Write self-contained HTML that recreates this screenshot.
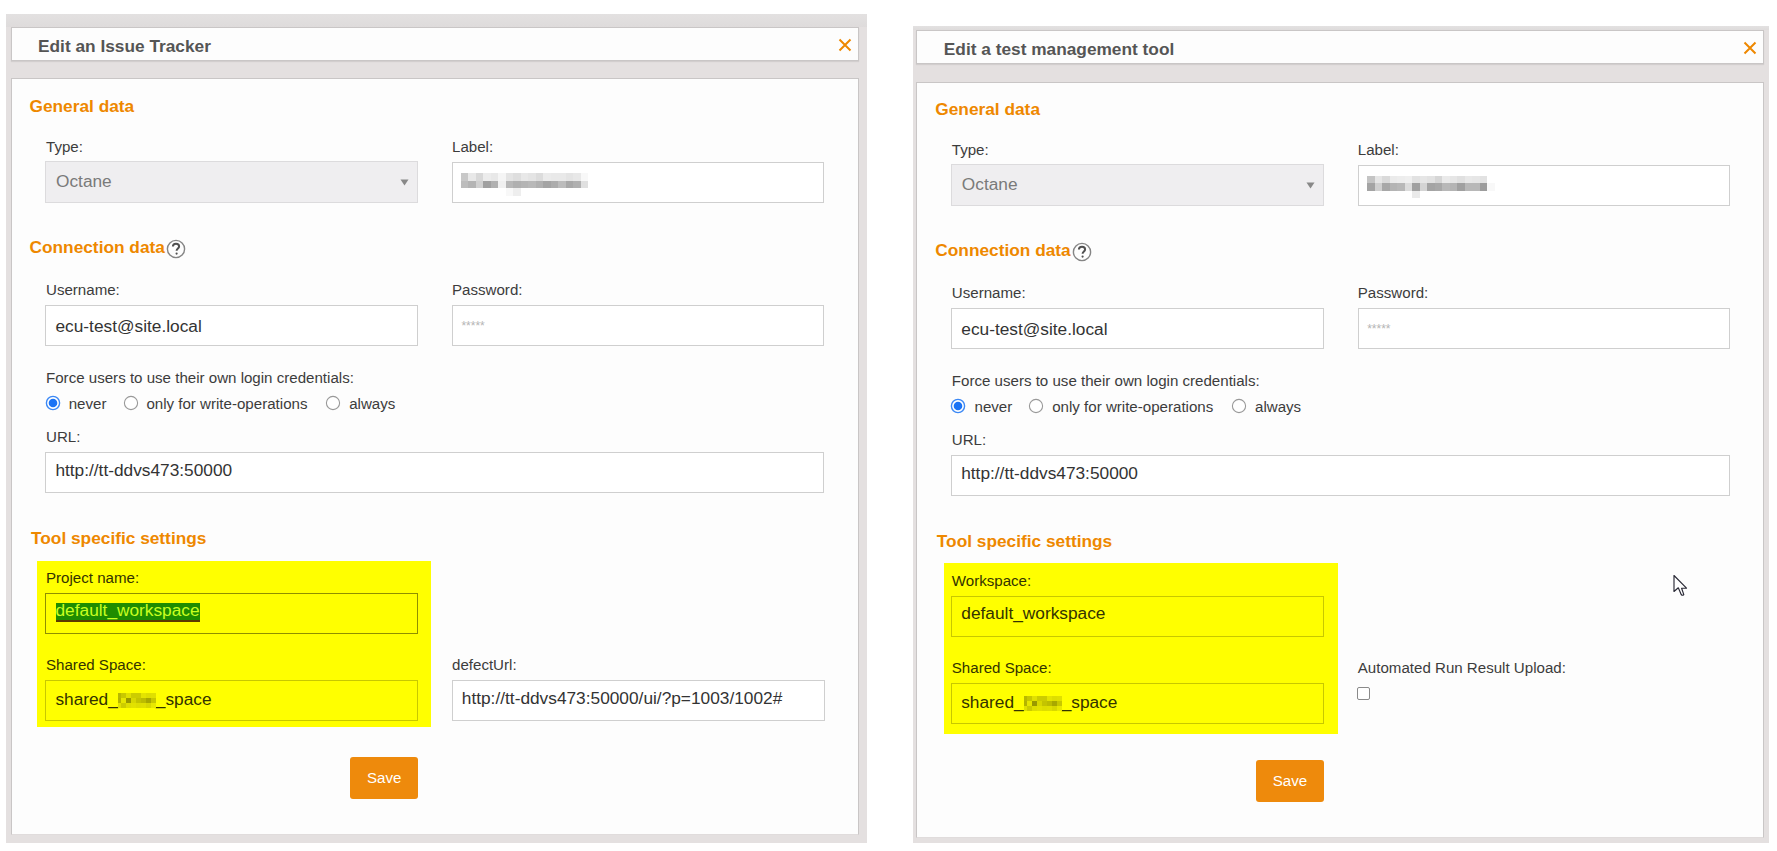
<!DOCTYPE html>
<html><head><meta charset="utf-8"><style>
html,body{margin:0;padding:0;background:#fff;width:1777px;height:851px;overflow:hidden;position:relative}
.t{position:absolute;white-space:nowrap;font-family:"Liberation Sans",sans-serif}
.r{position:absolute}
</style></head><body>
<div class="r" style="left:6.0px;top:14.0px;width:861.0px;height:829.0px;background:#e4e0e0"></div>
<div class="r" style="left:6.0px;top:14.0px;width:861.0px;height:13.0px;background:linear-gradient(#e3e1e1,#dedbdb)"></div>
<div class="r" style="left:11.0px;top:27.0px;width:848.0px;height:34.0px;background:#fdfdfd;border:1px solid #c9c6c6;box-sizing:border-box;box-shadow:0 1px 1px rgba(0,0,0,.08)"></div>
<div class="r" style="left:11.0px;top:78.0px;width:848.0px;height:757.0px;background:#fdfdfd;border:1px solid #c9c6c6;border-bottom-color:#e0dcdc;box-sizing:border-box"></div>
<div class="t" style="left:38.0px;top:36.31px;font-size:17.3px;line-height:21px;color:#555;font-weight:bold;">Edit an Issue Tracker</div>
<svg class="r" style="left:837.5px;top:38px" width="14" height="14" viewBox="0 0 14 14"><path d="M1.5 1.5L12.5 12.5M12.5 1.5L1.5 12.5" stroke="#ee8800" stroke-width="2" fill="none"/></svg>
<div class="t" style="left:29.5px;top:96.01px;font-size:17.3px;line-height:21px;color:#ee8800;font-weight:bold;">General data</div>
<div class="t" style="left:46.0px;top:138.37px;font-size:15.1px;line-height:18px;color:#3c3c3c;font-weight:normal;">Type:</div>
<div class="r" style="left:45.3px;top:161.4px;width:372.9px;height:41.3px;background:#efeef0;border:1px solid #dcdbdd;box-sizing:border-box"></div>
<div class="t" style="left:56.0px;top:170.91px;font-size:17.3px;line-height:21px;color:#7a7a7a;font-weight:normal;">Octane</div>
<svg class="r" style="left:400px;top:178px" width="9" height="8" viewBox="0 0 9 8"><path d="M0.5 1.5H8.5L4.5 7.5Z" fill="#888"/></svg>
<div class="t" style="left:452.0px;top:138.07px;font-size:15.1px;line-height:18px;color:#3c3c3c;font-weight:normal;">Label:</div>
<div class="r" style="left:451.9px;top:161.5px;width:372.6px;height:41.2px;background:#fff;border:1px solid #cfcfcf;box-sizing:border-box"></div>
<div class="r" style="left:460.5px;top:173.1px;width:7.5px;height:7.5px;background:#c8c8c8"></div>
<div class="r" style="left:468.0px;top:173.1px;width:7.5px;height:7.5px;background:#e8e8e8"></div>
<div class="r" style="left:475.5px;top:173.1px;width:7.5px;height:7.5px;background:#d8d8d8"></div>
<div class="r" style="left:483.0px;top:173.1px;width:7.5px;height:7.5px;background:#ececec"></div>
<div class="r" style="left:490.5px;top:173.1px;width:7.5px;height:7.5px;background:#e8e8e8"></div>
<div class="r" style="left:498.0px;top:173.1px;width:7.5px;height:7.5px;background:#f5f5f5"></div>
<div class="r" style="left:505.5px;top:173.1px;width:7.5px;height:7.5px;background:#e4e4e4"></div>
<div class="r" style="left:513.0px;top:173.1px;width:7.5px;height:7.5px;background:#dedede"></div>
<div class="r" style="left:520.5px;top:173.1px;width:7.5px;height:7.5px;background:#e8e8e8"></div>
<div class="r" style="left:528.0px;top:173.1px;width:7.5px;height:7.5px;background:#e4e4e4"></div>
<div class="r" style="left:535.5px;top:173.1px;width:7.5px;height:7.5px;background:#dcdcdc"></div>
<div class="r" style="left:543.0px;top:173.1px;width:7.5px;height:7.5px;background:#ebebeb"></div>
<div class="r" style="left:550.5px;top:173.1px;width:7.5px;height:7.5px;background:#e9e9e9"></div>
<div class="r" style="left:558.0px;top:173.1px;width:7.5px;height:7.5px;background:#e9e9e9"></div>
<div class="r" style="left:565.5px;top:173.1px;width:7.5px;height:7.5px;background:#e4e4e4"></div>
<div class="r" style="left:573.0px;top:173.1px;width:7.5px;height:7.5px;background:#e8e8e8"></div>
<div class="r" style="left:580.5px;top:173.1px;width:7.5px;height:7.5px;background:#f8f8f8"></div>
<div class="r" style="left:460.5px;top:180.6px;width:7.5px;height:7.5px;background:#bdbdbd"></div>
<div class="r" style="left:468.0px;top:180.6px;width:7.5px;height:7.5px;background:#b4b4b4"></div>
<div class="r" style="left:475.5px;top:180.6px;width:7.5px;height:7.5px;background:#d0d0d0"></div>
<div class="r" style="left:483.0px;top:180.6px;width:7.5px;height:7.5px;background:#a0a0a0"></div>
<div class="r" style="left:490.5px;top:180.6px;width:7.5px;height:7.5px;background:#b0b0b0"></div>
<div class="r" style="left:498.0px;top:180.6px;width:7.5px;height:7.5px;background:#f0f0f0"></div>
<div class="r" style="left:505.5px;top:180.6px;width:7.5px;height:7.5px;background:#b8b8b8"></div>
<div class="r" style="left:513.0px;top:180.6px;width:7.5px;height:7.5px;background:#b0b0b0"></div>
<div class="r" style="left:520.5px;top:180.6px;width:7.5px;height:7.5px;background:#b4b4b4"></div>
<div class="r" style="left:528.0px;top:180.6px;width:7.5px;height:7.5px;background:#b8b8b8"></div>
<div class="r" style="left:535.5px;top:180.6px;width:7.5px;height:7.5px;background:#b0b0b0"></div>
<div class="r" style="left:543.0px;top:180.6px;width:7.5px;height:7.5px;background:#a4a4a4"></div>
<div class="r" style="left:550.5px;top:180.6px;width:7.5px;height:7.5px;background:#acacac"></div>
<div class="r" style="left:558.0px;top:180.6px;width:7.5px;height:7.5px;background:#bcbcbc"></div>
<div class="r" style="left:565.5px;top:180.6px;width:7.5px;height:7.5px;background:#a8a8a8"></div>
<div class="r" style="left:573.0px;top:180.6px;width:7.5px;height:7.5px;background:#b0b0b0"></div>
<div class="r" style="left:580.5px;top:180.6px;width:7.5px;height:7.5px;background:#e0e0e0"></div>
<div class="r" style="left:505.5px;top:188.1px;width:7.5px;height:7.5px;background:#f8f8f8"></div>
<div class="r" style="left:513.0px;top:188.1px;width:7.5px;height:7.5px;background:#eeeeee"></div>
<div class="t" style="left:29.5px;top:237.11px;font-size:17.3px;line-height:21px;color:#ee8800;font-weight:bold;">Connection data</div>
<svg class="r" style="left:166px;top:239px" width="20" height="20" viewBox="0 0 20 20"><circle cx="10" cy="10" r="8.6" stroke="#858585" stroke-width="1.4" fill="none"/><path d="M6.9 7.6C6.9 5.8 8.2 4.7 10 4.7C11.8 4.7 13.1 5.8 13.1 7.4C13.1 9.4 10.6 9.6 10.6 11.8" stroke="#505050" stroke-width="2" fill="none"/><circle cx="10.6" cy="14.6" r="1.1" fill="#505050"/></svg>
<div class="t" style="left:46.0px;top:281.27px;font-size:15.1px;line-height:18px;color:#3c3c3c;font-weight:normal;">Username:</div>
<div class="t" style="left:452.0px;top:281.47px;font-size:15.1px;line-height:18px;color:#3c3c3c;font-weight:normal;">Password:</div>
<div class="r" style="left:45.3px;top:305.0px;width:372.9px;height:41.1px;background:#fff;border:1px solid #cfcfcf;box-sizing:border-box"></div>
<div class="t" style="left:55.5px;top:315.51px;font-size:17.3px;line-height:21px;color:#333;font-weight:normal;">ecu-test@site.local</div>
<div class="r" style="left:451.9px;top:305.0px;width:372.6px;height:41.4px;background:#fff;border:1px solid #cfcfcf;box-sizing:border-box"></div>
<div class="t" style="left:461.4px;top:318.84px;font-size:12px;line-height:14px;color:#b5b5b5;font-weight:normal;">*****</div>
<div class="t" style="left:46.0px;top:368.77px;font-size:15.1px;line-height:18px;color:#3c3c3c;font-weight:normal;">Force users to use their own login credentials:</div>
<svg class="r" style="left:44.5px;top:394.5px" width="16" height="16" viewBox="0 0 16 16"><circle cx="8" cy="8" r="6.6" stroke="#3b88f5" stroke-width="1.4" fill="#fff"/><circle cx="8" cy="8" r="4.3" fill="#1a73f5"/></svg>
<svg class="r" style="left:122.5px;top:394.5px" width="16" height="16" viewBox="0 0 16 16"><circle cx="8" cy="8" r="6.6" stroke="#999" stroke-width="1.1" fill="#fff"/></svg>
<svg class="r" style="left:325.2px;top:394.5px" width="16" height="16" viewBox="0 0 16 16"><circle cx="8" cy="8" r="6.6" stroke="#999" stroke-width="1.1" fill="#fff"/></svg>
<div class="t" style="left:68.7px;top:395.37px;font-size:15.1px;line-height:18px;color:#3c3c3c;font-weight:normal;">never</div>
<div class="t" style="left:146.4px;top:395.37px;font-size:15.1px;line-height:18px;color:#3c3c3c;font-weight:normal;">only for write-operations</div>
<div class="t" style="left:349.2px;top:395.37px;font-size:15.1px;line-height:18px;color:#3c3c3c;font-weight:normal;">always</div>
<div class="t" style="left:46.0px;top:428.47px;font-size:15.1px;line-height:18px;color:#3c3c3c;font-weight:normal;">URL:</div>
<div class="r" style="left:45.3px;top:451.5px;width:779.2px;height:41.6px;background:#fff;border:1px solid #cfcfcf;box-sizing:border-box"></div>
<div class="t" style="left:55.4px;top:460.41px;font-size:17.3px;line-height:21px;color:#333;font-weight:normal;">http://tt-ddvs473:50000</div>
<div class="t" style="left:31.0px;top:527.51px;font-size:17.3px;line-height:21px;color:#ee8800;font-weight:bold;">Tool specific settings</div>
<div class="r" style="left:37.0px;top:561.0px;width:394.0px;height:166.0px;background:#ffff00"></div>
<div class="t" style="left:46.0px;top:568.87px;font-size:15.1px;line-height:18px;color:#333300;font-weight:normal;">Project name:</div>
<div class="r" style="left:45.4px;top:593.3px;width:372.8px;height:40.5px;border:1px solid #8f8f00;box-sizing:border-box"></div>
<div class="r" style="left:55.5px;top:603.2px;width:144.4px;height:19.1px;background:#1f8c00;border-bottom:2px solid #5a3a00;box-sizing:border-box"></div>
<div class="t" style="left:55.5px;top:599.81px;font-size:17.3px;line-height:21px;color:#c8ff20;font-weight:normal;">default_workspace</div>
<div class="t" style="left:46.0px;top:656.27px;font-size:15.1px;line-height:18px;color:#333300;font-weight:normal;">Shared Space:</div>
<div class="r" style="left:45.2px;top:679.7px;width:373.1px;height:41.1px;border:1px solid #c8c800;box-sizing:border-box"></div>
<div class="t" style="left:55.4px;top:688.81px;font-size:17.3px;line-height:21px;color:#333300;font-weight:normal;">shared_<span style='display:inline-block;width:38px'></span>_space</div>
<div class="r" style="left:118.2px;top:693.1px;width:2.7px;height:4.9px;background:#b8b800"></div>
<div class="r" style="left:120.9px;top:693.1px;width:5.0px;height:4.9px;background:#c8c800"></div>
<div class="r" style="left:125.9px;top:693.1px;width:5.0px;height:4.9px;background:#e0e000"></div>
<div class="r" style="left:130.9px;top:693.1px;width:5.0px;height:4.9px;background:#cccc00"></div>
<div class="r" style="left:135.9px;top:693.1px;width:5.0px;height:4.9px;background:#cccc00"></div>
<div class="r" style="left:140.9px;top:693.1px;width:5.0px;height:4.9px;background:#e4e400"></div>
<div class="r" style="left:145.9px;top:693.1px;width:5.0px;height:4.9px;background:#dede00"></div>
<div class="r" style="left:150.9px;top:693.1px;width:5.0px;height:4.9px;background:#e0e000"></div>
<div class="r" style="left:118.2px;top:698.0px;width:2.7px;height:4.9px;background:#b4b400"></div>
<div class="r" style="left:120.9px;top:698.0px;width:5.0px;height:4.9px;background:#e6e600"></div>
<div class="r" style="left:125.9px;top:698.0px;width:5.0px;height:4.9px;background:#999900"></div>
<div class="r" style="left:130.9px;top:698.0px;width:5.0px;height:4.9px;background:#d8d800"></div>
<div class="r" style="left:135.9px;top:698.0px;width:5.0px;height:4.9px;background:#c4c400"></div>
<div class="r" style="left:140.9px;top:698.0px;width:5.0px;height:4.9px;background:#bcbc00"></div>
<div class="r" style="left:145.9px;top:698.0px;width:5.0px;height:4.9px;background:#a8a800"></div>
<div class="r" style="left:150.9px;top:698.0px;width:5.0px;height:4.9px;background:#c8c800"></div>
<div class="r" style="left:118.2px;top:702.9px;width:2.7px;height:4.9px;background:#e0e000"></div>
<div class="r" style="left:120.9px;top:702.9px;width:5.0px;height:4.9px;background:#cccc00"></div>
<div class="r" style="left:125.9px;top:702.9px;width:5.0px;height:4.9px;background:#dede00"></div>
<div class="r" style="left:130.9px;top:702.9px;width:5.0px;height:4.9px;background:#e2e200"></div>
<div class="r" style="left:135.9px;top:702.9px;width:5.0px;height:4.9px;background:#dede00"></div>
<div class="r" style="left:140.9px;top:702.9px;width:5.0px;height:4.9px;background:#e0e000"></div>
<div class="r" style="left:145.9px;top:702.9px;width:5.0px;height:4.9px;background:#d8d800"></div>
<div class="r" style="left:150.9px;top:702.9px;width:5.0px;height:4.9px;background:#e8e800"></div>
<div class="t" style="left:452.0px;top:655.97px;font-size:15.1px;line-height:18px;color:#3c3c3c;font-weight:normal;">defectUrl:</div>
<div class="r" style="left:451.6px;top:680.0px;width:373.1px;height:40.6px;background:#fff;border:1px solid #cfcfcf;box-sizing:border-box"></div>
<div class="t" style="left:461.8px;top:688.31px;font-size:17.3px;line-height:21px;color:#333;font-weight:normal;">http://tt-ddvs473:50000/ui/?p=1003/1002#</div>
<div class="r" style="left:350.0px;top:756.5px;width:68.3px;height:42.7px;background:#ee8a0c;border-radius:3px"></div>
<div class="t" style="left:367.0px;top:769.27px;font-size:15.1px;line-height:18px;color:#fff;font-weight:normal;">Save</div>
<div class="r" style="left:913.0px;top:26.0px;width:856.0px;height:817.0px;background:#e4e0e0"></div>
<div class="r" style="left:913.0px;top:26.0px;width:856.0px;height:4.0px;background:linear-gradient(#e3e1e1,#dedbdb)"></div>
<div class="r" style="left:916.0px;top:30.0px;width:848.0px;height:34.0px;background:#fdfdfd;border:1px solid #c9c6c6;box-sizing:border-box;box-shadow:0 1px 1px rgba(0,0,0,.08)"></div>
<div class="r" style="left:916.0px;top:82.0px;width:848.0px;height:756.0px;background:#fdfdfd;border:1px solid #c9c6c6;border-bottom-color:#e0dcdc;box-sizing:border-box"></div>
<div class="t" style="left:943.8px;top:39.31px;font-size:17.3px;line-height:21px;color:#555;font-weight:bold;">Edit a test management tool</div>
<svg class="r" style="left:1743.3px;top:41px" width="14" height="14" viewBox="0 0 14 14"><path d="M1.5 1.5L12.5 12.5M12.5 1.5L1.5 12.5" stroke="#ee8800" stroke-width="2" fill="none"/></svg>
<div class="t" style="left:935.3px;top:99.01px;font-size:17.3px;line-height:21px;color:#ee8800;font-weight:bold;">General data</div>
<div class="t" style="left:951.8px;top:141.37px;font-size:15.1px;line-height:18px;color:#3c3c3c;font-weight:normal;">Type:</div>
<div class="r" style="left:951.1px;top:164.4px;width:372.9px;height:41.3px;background:#efeef0;border:1px solid #dcdbdd;box-sizing:border-box"></div>
<div class="t" style="left:961.8px;top:173.91px;font-size:17.3px;line-height:21px;color:#7a7a7a;font-weight:normal;">Octane</div>
<svg class="r" style="left:1305.8px;top:181px" width="9" height="8" viewBox="0 0 9 8"><path d="M0.5 1.5H8.5L4.5 7.5Z" fill="#888"/></svg>
<div class="t" style="left:1357.8px;top:141.07px;font-size:15.1px;line-height:18px;color:#3c3c3c;font-weight:normal;">Label:</div>
<div class="r" style="left:1357.7px;top:164.5px;width:372.6px;height:41.2px;background:#fff;border:1px solid #cfcfcf;box-sizing:border-box"></div>
<div class="r" style="left:1367.1px;top:175.9px;width:7.5px;height:7.5px;background:#c4c4c4"></div>
<div class="r" style="left:1374.6px;top:175.9px;width:7.5px;height:7.5px;background:#e6e6e6"></div>
<div class="r" style="left:1382.1px;top:175.9px;width:7.5px;height:7.5px;background:#dadada"></div>
<div class="r" style="left:1389.6px;top:175.9px;width:7.5px;height:7.5px;background:#ebebeb"></div>
<div class="r" style="left:1397.1px;top:175.9px;width:7.5px;height:7.5px;background:#ededed"></div>
<div class="r" style="left:1404.6px;top:175.9px;width:7.5px;height:7.5px;background:#efefef"></div>
<div class="r" style="left:1412.1px;top:175.9px;width:7.5px;height:7.5px;background:#e2e2e2"></div>
<div class="r" style="left:1419.6px;top:175.9px;width:7.5px;height:7.5px;background:#e6e6e6"></div>
<div class="r" style="left:1427.1px;top:175.9px;width:7.5px;height:7.5px;background:#e2e2e2"></div>
<div class="r" style="left:1434.6px;top:175.9px;width:7.5px;height:7.5px;background:#d6d6d6"></div>
<div class="r" style="left:1442.1px;top:175.9px;width:7.5px;height:7.5px;background:#eaeaea"></div>
<div class="r" style="left:1449.6px;top:175.9px;width:7.5px;height:7.5px;background:#e6e6e6"></div>
<div class="r" style="left:1457.1px;top:175.9px;width:7.5px;height:7.5px;background:#e0e0e0"></div>
<div class="r" style="left:1464.6px;top:175.9px;width:7.5px;height:7.5px;background:#e8e8e8"></div>
<div class="r" style="left:1472.1px;top:175.9px;width:7.5px;height:7.5px;background:#e6e6e6"></div>
<div class="r" style="left:1479.6px;top:175.9px;width:7.5px;height:7.5px;background:#e2e2e2"></div>
<div class="r" style="left:1367.1px;top:183.4px;width:7.5px;height:7.5px;background:#a4a4a4"></div>
<div class="r" style="left:1374.6px;top:183.4px;width:7.5px;height:7.5px;background:#d0d0d0"></div>
<div class="r" style="left:1382.1px;top:183.4px;width:7.5px;height:7.5px;background:#a8a8a8"></div>
<div class="r" style="left:1389.6px;top:183.4px;width:7.5px;height:7.5px;background:#b4b4b4"></div>
<div class="r" style="left:1397.1px;top:183.4px;width:7.5px;height:7.5px;background:#b8b8b8"></div>
<div class="r" style="left:1404.6px;top:183.4px;width:7.5px;height:7.5px;background:#dcdcdc"></div>
<div class="r" style="left:1412.1px;top:183.4px;width:7.5px;height:7.5px;background:#a0a0a0"></div>
<div class="r" style="left:1419.6px;top:183.4px;width:7.5px;height:7.5px;background:#d4d4d4"></div>
<div class="r" style="left:1427.1px;top:183.4px;width:7.5px;height:7.5px;background:#a4a4a4"></div>
<div class="r" style="left:1434.6px;top:183.4px;width:7.5px;height:7.5px;background:#a8a8a8"></div>
<div class="r" style="left:1442.1px;top:183.4px;width:7.5px;height:7.5px;background:#b8b8b8"></div>
<div class="r" style="left:1449.6px;top:183.4px;width:7.5px;height:7.5px;background:#b4b4b4"></div>
<div class="r" style="left:1457.1px;top:183.4px;width:7.5px;height:7.5px;background:#a0a0a0"></div>
<div class="r" style="left:1464.6px;top:183.4px;width:7.5px;height:7.5px;background:#b8b8b8"></div>
<div class="r" style="left:1472.1px;top:183.4px;width:7.5px;height:7.5px;background:#b8b8b8"></div>
<div class="r" style="left:1479.6px;top:183.4px;width:7.5px;height:7.5px;background:#9c9c9c"></div>
<div class="r" style="left:1487.1px;top:183.4px;width:7.5px;height:7.5px;background:#f8f8f8"></div>
<div class="r" style="left:1412.1px;top:190.9px;width:7.5px;height:7.5px;background:#eaeaea"></div>
<div class="t" style="left:935.3px;top:240.11px;font-size:17.3px;line-height:21px;color:#ee8800;font-weight:bold;">Connection data</div>
<svg class="r" style="left:1071.8px;top:242px" width="20" height="20" viewBox="0 0 20 20"><circle cx="10" cy="10" r="8.6" stroke="#858585" stroke-width="1.4" fill="none"/><path d="M6.9 7.6C6.9 5.8 8.2 4.7 10 4.7C11.8 4.7 13.1 5.8 13.1 7.4C13.1 9.4 10.6 9.6 10.6 11.8" stroke="#505050" stroke-width="2" fill="none"/><circle cx="10.6" cy="14.6" r="1.1" fill="#505050"/></svg>
<div class="t" style="left:951.8px;top:284.27px;font-size:15.1px;line-height:18px;color:#3c3c3c;font-weight:normal;">Username:</div>
<div class="t" style="left:1357.8px;top:284.47px;font-size:15.1px;line-height:18px;color:#3c3c3c;font-weight:normal;">Password:</div>
<div class="r" style="left:951.1px;top:308.0px;width:372.9px;height:41.1px;background:#fff;border:1px solid #cfcfcf;box-sizing:border-box"></div>
<div class="t" style="left:961.3px;top:318.51px;font-size:17.3px;line-height:21px;color:#333;font-weight:normal;">ecu-test@site.local</div>
<div class="r" style="left:1357.7px;top:308.0px;width:372.6px;height:41.4px;background:#fff;border:1px solid #cfcfcf;box-sizing:border-box"></div>
<div class="t" style="left:1367.2px;top:321.84px;font-size:12px;line-height:14px;color:#b5b5b5;font-weight:normal;">*****</div>
<div class="t" style="left:951.8px;top:371.77px;font-size:15.1px;line-height:18px;color:#3c3c3c;font-weight:normal;">Force users to use their own login credentials:</div>
<svg class="r" style="left:950.3px;top:397.5px" width="16" height="16" viewBox="0 0 16 16"><circle cx="8" cy="8" r="6.6" stroke="#3b88f5" stroke-width="1.4" fill="#fff"/><circle cx="8" cy="8" r="4.3" fill="#1a73f5"/></svg>
<svg class="r" style="left:1028.3px;top:397.5px" width="16" height="16" viewBox="0 0 16 16"><circle cx="8" cy="8" r="6.6" stroke="#999" stroke-width="1.1" fill="#fff"/></svg>
<svg class="r" style="left:1231.0px;top:397.5px" width="16" height="16" viewBox="0 0 16 16"><circle cx="8" cy="8" r="6.6" stroke="#999" stroke-width="1.1" fill="#fff"/></svg>
<div class="t" style="left:974.5px;top:398.37px;font-size:15.1px;line-height:18px;color:#3c3c3c;font-weight:normal;">never</div>
<div class="t" style="left:1052.2px;top:398.37px;font-size:15.1px;line-height:18px;color:#3c3c3c;font-weight:normal;">only for write-operations</div>
<div class="t" style="left:1255.0px;top:398.37px;font-size:15.1px;line-height:18px;color:#3c3c3c;font-weight:normal;">always</div>
<div class="t" style="left:951.8px;top:431.47px;font-size:15.1px;line-height:18px;color:#3c3c3c;font-weight:normal;">URL:</div>
<div class="r" style="left:951.1px;top:454.5px;width:779.2px;height:41.6px;background:#fff;border:1px solid #cfcfcf;box-sizing:border-box"></div>
<div class="t" style="left:961.2px;top:463.41px;font-size:17.3px;line-height:21px;color:#333;font-weight:normal;">http://tt-ddvs473:50000</div>
<div class="t" style="left:936.8px;top:530.51px;font-size:17.3px;line-height:21px;color:#ee8800;font-weight:bold;">Tool specific settings</div>
<div class="r" style="left:944.0px;top:563.0px;width:394.0px;height:170.6px;background:#ffff00"></div>
<div class="t" style="left:951.8px;top:571.87px;font-size:15.1px;line-height:18px;color:#333300;font-weight:normal;">Workspace:</div>
<div class="r" style="left:951.2px;top:596.3px;width:372.8px;height:40.5px;border:1px solid #c8c800;box-sizing:border-box"></div>
<div class="t" style="left:961.3px;top:602.81px;font-size:17.3px;line-height:21px;color:#333300;font-weight:normal;">default_workspace</div>
<div class="t" style="left:951.8px;top:659.27px;font-size:15.1px;line-height:18px;color:#333300;font-weight:normal;">Shared Space:</div>
<div class="r" style="left:951.0px;top:682.7px;width:373.1px;height:41.1px;border:1px solid #c8c800;box-sizing:border-box"></div>
<div class="t" style="left:961.2px;top:691.81px;font-size:17.3px;line-height:21px;color:#333300;font-weight:normal;">shared_<span style='display:inline-block;width:38px'></span>_space</div>
<div class="r" style="left:1024.0px;top:696.1px;width:2.7px;height:4.9px;background:#b8b800"></div>
<div class="r" style="left:1026.7px;top:696.1px;width:5.0px;height:4.9px;background:#c8c800"></div>
<div class="r" style="left:1031.7px;top:696.1px;width:5.0px;height:4.9px;background:#e0e000"></div>
<div class="r" style="left:1036.7px;top:696.1px;width:5.0px;height:4.9px;background:#cccc00"></div>
<div class="r" style="left:1041.7px;top:696.1px;width:5.0px;height:4.9px;background:#cccc00"></div>
<div class="r" style="left:1046.7px;top:696.1px;width:5.0px;height:4.9px;background:#e4e400"></div>
<div class="r" style="left:1051.7px;top:696.1px;width:5.0px;height:4.9px;background:#dede00"></div>
<div class="r" style="left:1056.7px;top:696.1px;width:5.0px;height:4.9px;background:#e0e000"></div>
<div class="r" style="left:1024.0px;top:701.0px;width:2.7px;height:4.9px;background:#b4b400"></div>
<div class="r" style="left:1026.7px;top:701.0px;width:5.0px;height:4.9px;background:#e6e600"></div>
<div class="r" style="left:1031.7px;top:701.0px;width:5.0px;height:4.9px;background:#999900"></div>
<div class="r" style="left:1036.7px;top:701.0px;width:5.0px;height:4.9px;background:#d8d800"></div>
<div class="r" style="left:1041.7px;top:701.0px;width:5.0px;height:4.9px;background:#c4c400"></div>
<div class="r" style="left:1046.7px;top:701.0px;width:5.0px;height:4.9px;background:#bcbc00"></div>
<div class="r" style="left:1051.7px;top:701.0px;width:5.0px;height:4.9px;background:#a8a800"></div>
<div class="r" style="left:1056.7px;top:701.0px;width:5.0px;height:4.9px;background:#c8c800"></div>
<div class="r" style="left:1024.0px;top:705.9px;width:2.7px;height:4.9px;background:#e0e000"></div>
<div class="r" style="left:1026.7px;top:705.9px;width:5.0px;height:4.9px;background:#cccc00"></div>
<div class="r" style="left:1031.7px;top:705.9px;width:5.0px;height:4.9px;background:#dede00"></div>
<div class="r" style="left:1036.7px;top:705.9px;width:5.0px;height:4.9px;background:#e2e200"></div>
<div class="r" style="left:1041.7px;top:705.9px;width:5.0px;height:4.9px;background:#dede00"></div>
<div class="r" style="left:1046.7px;top:705.9px;width:5.0px;height:4.9px;background:#e0e000"></div>
<div class="r" style="left:1051.7px;top:705.9px;width:5.0px;height:4.9px;background:#d8d800"></div>
<div class="r" style="left:1056.7px;top:705.9px;width:5.0px;height:4.9px;background:#e8e800"></div>
<div class="t" style="left:1357.8px;top:658.97px;font-size:15.1px;line-height:18px;color:#3c3c3c;font-weight:normal;">Automated Run Result Upload:</div>
<div class="r" style="left:1356.7px;top:686.9px;width:13.8px;height:13.6px;background:#fff;border:1px solid #8a8a8a;border-radius:2px;box-sizing:border-box"></div>
<div class="r" style="left:1255.8px;top:759.5px;width:68.3px;height:42.7px;background:#ee8a0c;border-radius:3px"></div>
<div class="t" style="left:1272.8px;top:772.27px;font-size:15.1px;line-height:18px;color:#fff;font-weight:normal;">Save</div>
<svg class="r" style="left:1668px;top:570px" width="24" height="30" viewBox="1668 570 24 30"><path d="M1674 575.5V591.5L1678.3 587.8L1681.2 594.5Q1682.5 596 1683.8 594.6L1681.6 588.2H1686.5Z" stroke="#2a2a36" stroke-width="1.15" fill="#fff" stroke-linejoin="round"/></svg>
</body></html>
